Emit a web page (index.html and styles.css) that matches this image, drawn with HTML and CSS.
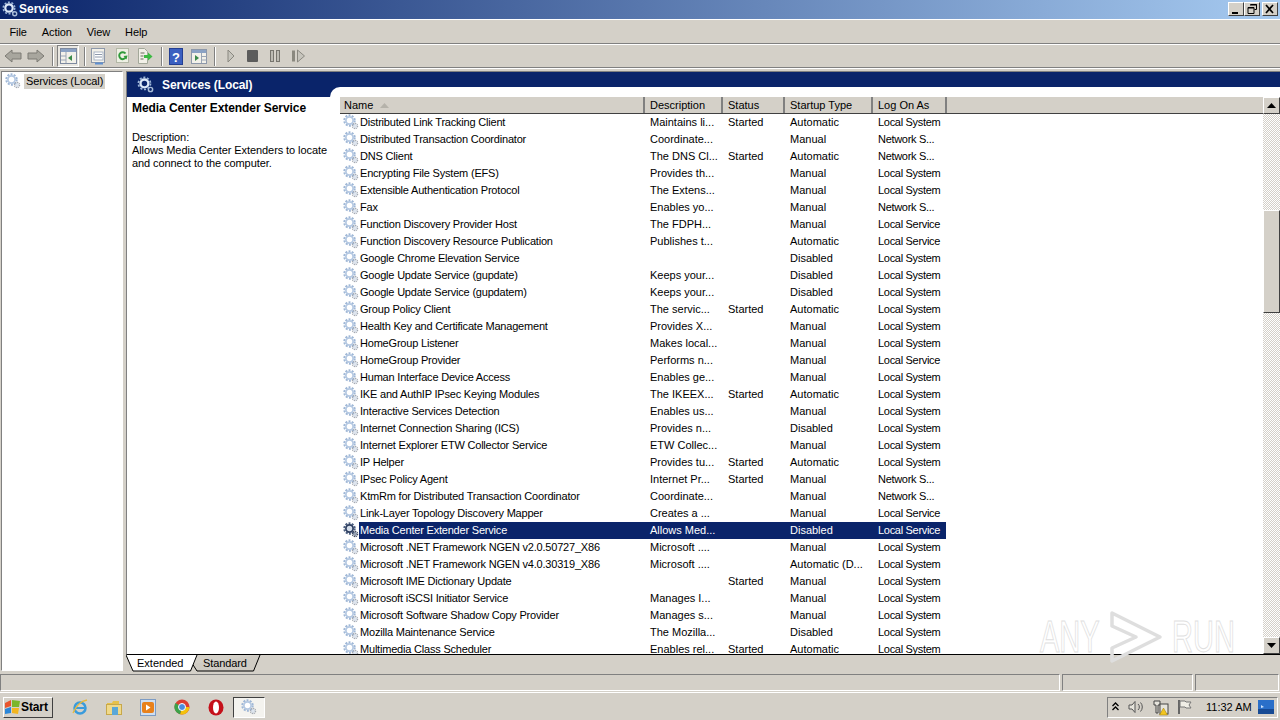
FILE: index.html
```html
<!DOCTYPE html>
<html lang="en">
<head>
<meta charset="utf-8">
<title>Services</title>
<link rel="stylesheet" href="styles.css">
</head>
<body>
<svg class="defs" width="0" height="0">
  <defs>
    <symbol id="gear" viewBox="0 0 16 16">
      <circle cx="6.500" cy="6.500" r="5.200" fill="none" stroke="#9fb7d6" stroke-width="2" stroke-dasharray="2 1.270"/>
      <circle cx="6.500" cy="6.500" r="3.600" fill="#fff" stroke="#b4c8e2" stroke-width="1.700"/>
      <circle cx="12" cy="12" r="2.600" fill="none" stroke="#a4a9b2" stroke-width="1.300" stroke-dasharray="1.300 .7"/>
      <circle cx="12" cy="12" r="1.400" fill="#f2f5f9" stroke="#b7c6d8" stroke-width=".7"/>
    </symbol>
    <symbol id="gear-dark" viewBox="0 0 16 16">
      <circle cx="6.500" cy="6.500" r="5.200" fill="none" stroke="#4c5f80" stroke-width="2" stroke-dasharray="2 1.270"/>
      <circle cx="6.500" cy="6.500" r="3.600" fill="#d5deea" stroke="#2c3d5f" stroke-width="1.700"/>
      <circle cx="12" cy="12" r="2.600" fill="none" stroke="#3d4658" stroke-width="1.300" stroke-dasharray="1.300 .7"/>
      <circle cx="12" cy="12" r="1.400" fill="#c9d2de" stroke="#364664" stroke-width=".7"/>
    </symbol>
    <symbol id="gear-head" viewBox="0 0 16 16">
      <circle cx="7" cy="7" r="5.700" fill="none" stroke="#9db6d8" stroke-width="1.600" stroke-dasharray="2 1.580"/>
      <circle cx="7" cy="7" r="3.700" fill="#0a246a" stroke="#dce8f7" stroke-width="2.200"/>
      <circle cx="12.700" cy="12.700" r="2" fill="#0a246a" stroke="#a9bdd8" stroke-width="1.400"/>
    </symbol>
  </defs>
</svg>

<div class="screen">
  <header class="titlebar">
    <svg class="title-icon"><use href="#gear-head"/></svg>
    <span class="title-text">Services</span>
    <div class="win-btns">
      <button class="win-btn"><svg width="14" height="12"><rect x="3" y="9" width="6" height="2" fill="#000"/></svg></button>
      <button class="win-btn"><svg width="14" height="12"><path d="M5.500 1.500h6v5h-2M3 4.500h6v6H3z" fill="none" stroke="#000"/><path d="M5 2h7M3 5h6" stroke="#000"/></svg></button>
      <button class="win-btn win-close"><svg width="14" height="12"><path d="M3 2l7 8M10 2l-7 8" stroke="#000" stroke-width="1.700"/></svg></button>
    </div>
  </header>

  <nav class="menubar">
    <span class="menu-item">File</span>
    <span class="menu-item">Action</span>
    <span class="menu-item">View</span>
    <span class="menu-item">Help</span>
  </nav>

  <div class="toolbar">
    <div class="tool-group nav-group">
      <svg width="18" height="16" viewBox="0 0 18 16"><path d="M1 8l7-6v3h9v6H8v3z" fill="#a8a69e" stroke="#7d7b74"/></svg>
      <svg width="18" height="16" viewBox="0 0 18 16"><path d="M17 8l-7-6v3H1v6h9v3z" fill="#a8a69e" stroke="#7d7b74"/></svg>
    </div>
    <span class="tool-sep sep-a"></span>
    <span class="tool-active"><svg width="17" height="16" viewBox="0 0 17 16"><rect x=".5" y=".5" width="16" height="15" fill="#f3f1ea" stroke="#7e8aa0"/><rect x="1" y="1" width="15" height="3" fill="#8ba2c4"/><path d="M6 4v11M1 8h5M1 12h5" stroke="#9aa5b5"/><path d="M12 7v6l-4-3z" fill="#3a8a4a"/></svg></span>
    <span class="tool-sep sep-b"></span>
    <div class="tool-group doc-group">
      <svg class="ic-doc" width="15" height="18" viewBox="0 0 15 18"><rect x=".5" y="1.500" width="13" height="14" fill="#f2f0e8" stroke="#8d98aa"/><rect x="3" y="5" width="9" height="8" fill="#fff" stroke="#a9b4c4"/><path d="M4 7.500h7M4 10h7" stroke="#8d98aa"/><path d="M4 16.500h8" stroke="#5f8fcf" stroke-width="2"/></svg>
      <svg class="ic-refresh" width="13" height="18" viewBox="0 0 13 18"><rect x=".5" y="1.500" width="12" height="14" fill="#eef0e4" stroke="#b3b8a6"/><path d="M9.500 6.500a3.500 3.500 0 1 0 .2 4" fill="none" stroke="#2f9a3a" stroke-width="2"/><path d="M7.500 9l4-.5-1 4z" fill="#2f9a3a"/></svg>
      <svg width="16" height="18" viewBox="0 0 16 18"><path d="M1.500 1.500h6l3 3v12h-9z" fill="#f2f0e8" stroke="#a3a89a"/><path d="M3.500 6h4M3.500 9h3M3.500 12h3" stroke="#6a6a60"/><path d="M7 8h4V5.500l4.500 4-4.500 4V11H7z" fill="#3dba43"/></svg>
    </div>
    <span class="tool-sep sep-c"></span>
    <div class="tool-group help-group">
      <svg width="14" height="17" viewBox="0 0 14 17"><rect x=".5" y=".5" width="13" height="16" fill="#3b5fc0" stroke="#243f93"/><text x="7" y="13.500" class="help-q">?</text></svg>
      <svg width="16" height="17" viewBox="0 0 16 17"><rect x=".5" y="1.500" width="15" height="14" fill="#f3f1ea" stroke="#8d98aa"/><rect x="1" y="2" width="14" height="3" fill="#8ba2c4"/><path d="M10.500 5v10M10.500 8.500h5M10.500 12h5" stroke="#9aa5b5"/><path d="M4 7v6l4-3z" fill="#3a8a4a"/></svg>
    </div>
    <span class="tool-sep sep-d"></span>
    <div class="tool-group media-group">
      <svg width="8" height="14" viewBox="0 0 8 14"><path d="M1 1l6 6-6 6z" fill="#c6c4bc" stroke="#8a8880"/></svg>
      <svg width="11" height="12" viewBox="0 0 11 12"><rect width="11" height="12" rx="1" fill="#5c5c5c"/></svg>
      <svg width="10" height="14" viewBox="0 0 10 14"><rect x=".5" y="1.500" width="3" height="11" fill="#bdbbb3" stroke="#77756e"/><rect x="6.500" y="1.500" width="3" height="11" fill="#bdbbb3" stroke="#77756e"/></svg>
      <svg width="13" height="14" viewBox="0 0 13 14"><rect x="0" y="1.500" width="3" height="11" fill="#8a887f"/><path d="M5.500 1l7 6-7 6z" fill="#c6c4bc" stroke="#8a8880"/></svg>
    </div>
  </div>

  <main class="workspace">
    <aside class="tree">
      <div class="tree-row">
        <svg class="row-icon"><use href="#gear"/></svg>
        <span class="tree-label">Services (Local)</span>
      </div>
    </aside>
    <section class="content">
      <div class="panel">
        <div class="panel-head">
          <svg class="panel-icon"><use href="#gear-head"/></svg>
          <span class="panel-title">Services (Local)</span>
        </div>
        <div class="panel-body">
          <div class="desc">
            <h2 class="desc-title">Media Center Extender Service</h2>
            <p class="desc-text">Description:<br>Allows Media Center Extenders to locate and connect to the computer.</p>
          </div>
          <div class="list">
            <div class="list-main">
              <div class="row head">
                <span class="hcell name-h">Name<svg class="sort" width="9" height="5"><path d="M0 5L4.500 0 9 5z" fill="#b5b2aa"/></svg></span>
                <span class="hcell">Description</span>
                <span class="hcell">Status</span>
                <span class="hcell">Startup Type</span>
                <span class="hcell">Log On As</span>
              </div>
              <div class="rows">
                <div class="row"><svg class="row-icon"><use href="#gear"/></svg><span class="c n">Distributed Link Tracking Client</span><span class="c">Maintains li...</span><span class="c">Started</span><span class="c">Automatic</span><span class="c l">Local System</span></div>
                <div class="row"><svg class="row-icon"><use href="#gear"/></svg><span class="c n">Distributed Transaction Coordinator</span><span class="c">Coordinate...</span><span class="c"></span><span class="c">Manual</span><span class="c l">Network S...</span></div>
                <div class="row"><svg class="row-icon"><use href="#gear"/></svg><span class="c n">DNS Client</span><span class="c">The DNS Cl...</span><span class="c">Started</span><span class="c">Automatic</span><span class="c l">Network S...</span></div>
                <div class="row"><svg class="row-icon"><use href="#gear"/></svg><span class="c n">Encrypting File System (EFS)</span><span class="c">Provides th...</span><span class="c"></span><span class="c">Manual</span><span class="c l">Local System</span></div>
                <div class="row"><svg class="row-icon"><use href="#gear"/></svg><span class="c n">Extensible Authentication Protocol</span><span class="c">The Extens...</span><span class="c"></span><span class="c">Manual</span><span class="c l">Local System</span></div>
                <div class="row"><svg class="row-icon"><use href="#gear"/></svg><span class="c n">Fax</span><span class="c">Enables yo...</span><span class="c"></span><span class="c">Manual</span><span class="c l">Network S...</span></div>
                <div class="row"><svg class="row-icon"><use href="#gear"/></svg><span class="c n">Function Discovery Provider Host</span><span class="c">The FDPH...</span><span class="c"></span><span class="c">Manual</span><span class="c l">Local Service</span></div>
                <div class="row"><svg class="row-icon"><use href="#gear"/></svg><span class="c n">Function Discovery Resource Publication</span><span class="c">Publishes t...</span><span class="c"></span><span class="c">Automatic</span><span class="c l">Local Service</span></div>
                <div class="row"><svg class="row-icon"><use href="#gear"/></svg><span class="c n">Google Chrome Elevation Service</span><span class="c"></span><span class="c"></span><span class="c">Disabled</span><span class="c l">Local System</span></div>
                <div class="row"><svg class="row-icon"><use href="#gear"/></svg><span class="c n">Google Update Service (gupdate)</span><span class="c">Keeps your...</span><span class="c"></span><span class="c">Disabled</span><span class="c l">Local System</span></div>
                <div class="row"><svg class="row-icon"><use href="#gear"/></svg><span class="c n">Google Update Service (gupdatem)</span><span class="c">Keeps your...</span><span class="c"></span><span class="c">Disabled</span><span class="c l">Local System</span></div>
                <div class="row"><svg class="row-icon"><use href="#gear"/></svg><span class="c n">Group Policy Client</span><span class="c">The servic...</span><span class="c">Started</span><span class="c">Automatic</span><span class="c l">Local System</span></div>
                <div class="row"><svg class="row-icon"><use href="#gear"/></svg><span class="c n">Health Key and Certificate Management</span><span class="c">Provides X...</span><span class="c"></span><span class="c">Manual</span><span class="c l">Local System</span></div>
                <div class="row"><svg class="row-icon"><use href="#gear"/></svg><span class="c n">HomeGroup Listener</span><span class="c">Makes local...</span><span class="c"></span><span class="c">Manual</span><span class="c l">Local System</span></div>
                <div class="row"><svg class="row-icon"><use href="#gear"/></svg><span class="c n">HomeGroup Provider</span><span class="c">Performs n...</span><span class="c"></span><span class="c">Manual</span><span class="c l">Local Service</span></div>
                <div class="row"><svg class="row-icon"><use href="#gear"/></svg><span class="c n">Human Interface Device Access</span><span class="c">Enables ge...</span><span class="c"></span><span class="c">Manual</span><span class="c l">Local System</span></div>
                <div class="row"><svg class="row-icon"><use href="#gear"/></svg><span class="c n">IKE and AuthIP IPsec Keying Modules</span><span class="c">The IKEEX...</span><span class="c">Started</span><span class="c">Automatic</span><span class="c l">Local System</span></div>
                <div class="row"><svg class="row-icon"><use href="#gear"/></svg><span class="c n">Interactive Services Detection</span><span class="c">Enables us...</span><span class="c"></span><span class="c">Manual</span><span class="c l">Local System</span></div>
                <div class="row"><svg class="row-icon"><use href="#gear"/></svg><span class="c n">Internet Connection Sharing (ICS)</span><span class="c">Provides n...</span><span class="c"></span><span class="c">Disabled</span><span class="c l">Local System</span></div>
                <div class="row"><svg class="row-icon"><use href="#gear"/></svg><span class="c n">Internet Explorer ETW Collector Service</span><span class="c">ETW Collec...</span><span class="c"></span><span class="c">Manual</span><span class="c l">Local System</span></div>
                <div class="row"><svg class="row-icon"><use href="#gear"/></svg><span class="c n">IP Helper</span><span class="c">Provides tu...</span><span class="c">Started</span><span class="c">Automatic</span><span class="c l">Local System</span></div>
                <div class="row"><svg class="row-icon"><use href="#gear"/></svg><span class="c n">IPsec Policy Agent</span><span class="c">Internet Pr...</span><span class="c">Started</span><span class="c">Manual</span><span class="c l">Network S...</span></div>
                <div class="row"><svg class="row-icon"><use href="#gear"/></svg><span class="c n">KtmRm for Distributed Transaction Coordinator</span><span class="c">Coordinate...</span><span class="c"></span><span class="c">Manual</span><span class="c l">Network S...</span></div>
                <div class="row"><svg class="row-icon"><use href="#gear"/></svg><span class="c n">Link-Layer Topology Discovery Mapper</span><span class="c">Creates a ...</span><span class="c"></span><span class="c">Manual</span><span class="c l">Local Service</span></div>
                <div class="row selected"><svg class="row-icon"><use href="#gear-dark"/></svg><span class="c n">Media Center Extender Service</span><span class="c">Allows Med...</span><span class="c"></span><span class="c">Disabled</span><span class="c l">Local Service</span></div>
                <div class="row"><svg class="row-icon"><use href="#gear"/></svg><span class="c n">Microsoft .NET Framework NGEN v2.0.50727_X86</span><span class="c">Microsoft ....</span><span class="c"></span><span class="c">Manual</span><span class="c l">Local System</span></div>
                <div class="row"><svg class="row-icon"><use href="#gear"/></svg><span class="c n">Microsoft .NET Framework NGEN v4.0.30319_X86</span><span class="c">Microsoft ....</span><span class="c"></span><span class="c">Automatic (D...</span><span class="c l">Local System</span></div>
                <div class="row"><svg class="row-icon"><use href="#gear"/></svg><span class="c n">Microsoft IME Dictionary Update</span><span class="c"></span><span class="c">Started</span><span class="c">Manual</span><span class="c l">Local System</span></div>
                <div class="row"><svg class="row-icon"><use href="#gear"/></svg><span class="c n">Microsoft iSCSI Initiator Service</span><span class="c">Manages I...</span><span class="c"></span><span class="c">Manual</span><span class="c l">Local System</span></div>
                <div class="row"><svg class="row-icon"><use href="#gear"/></svg><span class="c n">Microsoft Software Shadow Copy Provider</span><span class="c">Manages s...</span><span class="c"></span><span class="c">Manual</span><span class="c l">Local System</span></div>
                <div class="row"><svg class="row-icon"><use href="#gear"/></svg><span class="c n">Mozilla Maintenance Service</span><span class="c">The Mozilla...</span><span class="c"></span><span class="c">Disabled</span><span class="c l">Local System</span></div>
                <div class="row"><svg class="row-icon"><use href="#gear"/></svg><span class="c n">Multimedia Class Scheduler</span><span class="c">Enables rel...</span><span class="c">Started</span><span class="c">Automatic</span><span class="c l">Local System</span></div>
              </div>
            </div>
            <div class="scrollbar">
              <button class="sb-btn"><svg width="9" height="5"><path d="M0 5L4.500 0 9 5z" fill="#000"/></svg></button>
              <div class="sb-track"><div class="sb-thumb"></div></div>
              <button class="sb-btn"><svg width="9" height="5"><path d="M0 0L4.500 5 9 0z" fill="#000"/></svg></button>
            </div>
          </div>
        </div>
      </div>
      <div class="tabs">
        <svg class="tab-shapes" width="140" height="17" viewBox="0 0 140 17">
          <path d="M66.500 9L71 16H127.500L134 0" fill="#cfcbc3" stroke="#000"/>
          <path d="M0 0L7 16H64.500L71 0" fill="#fff" stroke="#000"/>
        </svg>
        <span class="tab tab-on">Extended</span>
        <span class="tab tab-off">Standard</span>
      </div>
    </section>
    <div class="watermark">
      <span class="wm-text">ANY</span>
      <svg class="wm-play" width="54" height="54" viewBox="0 0 54 54"><path d="M3 3L51 27 3 51V38L27 27 3 16z" fill="none" stroke="#dedede" stroke-width="3.500" stroke-linejoin="round"/></svg>
      <span class="wm-text">RUN</span>
    </div>
  </main>

  <div class="statusbar">
    <span class="st st-a"></span>
    <span class="st st-b"></span>
    <span class="st st-c"></span>
  </div>

  <footer class="taskbar">
    <button class="start">
      <svg width="17" height="16" viewBox="0 0 17 16"><path d="M1 4l6-3v6l-6 2z" fill="#e8552d"/><path d="M8 1l8 1-1 6H8z" fill="#7ab62c"/><path d="M1 10l6-2v6l-6 1z" fill="#2a86d8"/><path d="M8 9h7l-1 6-6-1z" fill="#f2b51f"/></svg>
      <span class="start-label">Start</span>
    </button>
    <div class="quick">
      <svg width="16" height="17" viewBox="0 0 16 17"><circle cx="8" cy="9" r="5.500" fill="none" stroke="#3a9bdc" stroke-width="2.500"/><path d="M3.500 9h9" stroke="#3a9bdc" stroke-width="2"/><path d="M1 14C4 7 9 2 15 1" fill="none" stroke="#e9b93a" stroke-width="1.300"/></svg>
      <svg width="16" height="15" viewBox="0 0 16 15"><path d="M1 3h5l1-2h6v3H1z" fill="#e6c14c"/><rect x=".5" y="4.500" width="15" height="10" fill="#f0d98a" stroke="#c7a84a"/><rect x="6" y="7" width="6" height="8" fill="#5aa7d8"/></svg>
      <svg width="16" height="17" viewBox="0 0 16 17"><rect x=".5" y=".5" width="15" height="16" fill="#cfdff2" stroke="#7d9cc4"/><rect x="2" y="3" width="12" height="11" rx="2" fill="#e8811c"/><path d="M6 5.500l4.500 3-4.500 3z" fill="#fff"/></svg>
      <svg width="16" height="16" viewBox="0 0 16 16"><circle cx="8" cy="8" r="7.500" fill="#dc3e32"/><path d="M8 8h7.500A7.500 7.500 0 0 1 6 15.200z" fill="#f4c20d"/><path d="M8 8L6 15.200A7.500 7.500 0 0 1 1.500 4z" fill="#3da24a"/><circle cx="8" cy="8" r="3.500" fill="#4a8de0" stroke="#fff"/></svg>
      <svg width="16" height="17" viewBox="0 0 16 17"><ellipse cx="8" cy="8.500" rx="7.500" ry="8" fill="#c5101a"/><ellipse cx="8" cy="8.500" rx="3" ry="6" fill="#fff"/></svg>
    </div>
    <button class="task-btn"><svg class="row-icon"><use href="#gear"/></svg></button>
    <div class="tray">
      <svg class="tr-arrows" width="7" height="10" viewBox="0 0 7 10"><path d="M.5 4l3-3 3 3M.5 8l3-3 3 3" fill="none" stroke="#000" stroke-width="1.300"/></svg>
      <svg class="tr-speaker" width="17" height="16" viewBox="0 0 17 16"><path d="M1 6h3l3-3.500v11L4 10H1z" fill="#e6e4dc" stroke="#555"/><path d="M10 5a4 4 0 0 1 0 6M12.500 3.500a6.500 6.500 0 0 1 0 9" fill="none" stroke="#555"/></svg>
      <svg class="tr-net" width="16" height="17" viewBox="0 0 16 17"><path d="M1 2h6v4H5v8H3V6H1z" fill="#e6e4dc" stroke="#444"/><rect x="7" y="5" width="8" height="10" fill="#e6e4dc" stroke="#444"/><path d="M10.500 9l4 7h-8z" fill="#f2c51f" stroke="#9a7a10" stroke-width=".5"/></svg>
      <svg class="tr-flag" width="16" height="16" viewBox="0 0 16 16"><path d="M2 1v14" stroke="#666" stroke-width="2"/><path d="M3 2h5l1 1h5l-2 3 2 3H9L8 8H3z" fill="#f0eee6" stroke="#777"/></svg>
      <span class="clock">11:32 AM</span>
      <svg class="tr-desk" width="16" height="14" viewBox="0 0 16 14"><rect width="16" height="14" fill="#2a6fc9"/><path d="M0 9h16v5H0z" fill="#174a94"/><path d="M3 5l3 2-3 1z" fill="#cfe3fb"/></svg>
    </div>
  </footer>
</div>
</body>
</html>
```

FILE: styles.css
```css
* { box-sizing: border-box; }
html, body { margin: 0; padding: 0; }
body { font-family: "Liberation Sans", Arial, sans-serif; font-size: 11px; color: #000; background: #d4d0c8; }
.defs { position: absolute; }
.screen { width: 1280px; height: 720px; overflow: hidden; display: flex; flex-direction: column; background: #d4d0c8; }

.titlebar { height: 19px; flex: none; display: flex; align-items: center; padding: 0 2px 1px 2px; background: linear-gradient(90deg, #0a246a 0%, #a6caf0 100%); color: #fff; }
.title-icon { width: 16px; height: 16px; flex: none; }
.title-text { font-weight: 700; font-size: 12px; margin-left: 1px; }
.win-btns { margin-left: auto; display: flex; }
.win-btn { width: 16px; height: 14px; padding: 0; margin: 0; background: #d4d0c8; border: 1px solid; border-color: #fff #404040 #404040 #fff; display: flex; align-items: center; justify-content: center; }
.win-close { margin-left: 2px; }

.menubar { height: 25px; flex: none; display: flex; align-items: center; padding-left: 2px; border-top: 1px solid #fff; border-bottom: 1px solid #808080; }
.menu-item { padding: 0 7.500px; letter-spacing: -.1px; }

.toolbar { height: 24px; flex: none; display: flex; align-items: center; border-top: 1px solid #fff; border-bottom: 1px solid #808080; }
.tool-group { display: flex; align-items: center; flex: none; }
.tool-sep { width: 2px; height: 19px; flex: none; border-left: 1px solid #808080; border-right: 1px solid #fff; }
.nav-group { gap: 5px; margin-left: 4px; }
.sep-a { margin: 0 3px 0 7px; }
.tool-active { width: 22px; height: 22px; flex: none; display: flex; align-items: center; justify-content: center; background: #e9e7e1; border: 1px solid; border-color: #808080 #fff #fff #808080; }
.sep-b { margin-left: 5px; }
.doc-group { margin-left: 5px; gap: 8px; }
.ic-doc { margin-right: 2px; }
.sep-c { margin-left: 8px; }
.help-group { margin-left: 6px; gap: 8px; }
.sep-d { margin-left: 7px; }
.media-group { margin-left: 11px; gap: 12px; }
.help-q { fill: #fff; font: 700 13px "Liberation Sans", sans-serif; text-anchor: middle; }

.workspace { flex: 1; min-height: 0; position: relative; display: flex; padding: 2px 0 0 1px; border-top: 1px solid #fff; }
.tree { width: 122px; flex: none; height: 600px; background: #fff; border: 1px solid; border-color: #808080 #fff #fff #808080; padding: 1px 3px; }
.tree-row { display: flex; align-items: center; height: 16px; gap: 3px; }
.tree-label { background: #d4d0c8; padding: 0 2px; line-height: 15px; letter-spacing: -.1px; }
.row-icon { width: 16px; height: 16px; flex: none; }

.content { flex: 1; margin-left: 3px; display: flex; flex-direction: column; min-width: 0; }
.panel { height: 584px; flex: none; display: flex; flex-direction: column; background: #fff; border-left: 1px solid #808080; border-top: 1px solid #808080; border-bottom: 1px solid #000; }
.panel-head { height: 25px; flex: none; position: relative; display: flex; align-items: center; gap: 8px; padding-left: 10px; background: #0a246a; color: #fff; }
.panel-head::after { content: ""; position: absolute; left: 203px; top: 15px; right: 0; bottom: 0; background: #fff; border-radius: 10px 0 0 0; }
.panel-icon { width: 17px; height: 17px; flex: none; }
.panel-title { font-weight: 700; font-size: 12px; letter-spacing: -.1px; }
.panel-body { flex: 1; min-height: 0; display: flex; }
.desc { width: 213px; flex: none; padding: 4px 5px 0 5px; }
.desc-title { margin: 0 0 15px; font-size: 12px; font-weight: 700; line-height: 15px; letter-spacing: -.07px; }
.desc-text { margin: 0; line-height: 13px; letter-spacing: -.08px; }

.list { flex: 1; min-width: 0; display: flex; }
.list-main { flex: 1; min-width: 0; display: flex; flex-direction: column; overflow: hidden; }
.row { display: grid; grid-template-columns: 19px 285px 78px 62px 88px 74px; height: 17px; align-items: stretch; width: 606px; white-space: nowrap; }
.head { grid-template-columns: 305px 78px 62px 88px 74px; flex: none; width: 100%; background: #d4d0c8; border-bottom: 1px solid #404040; }
.hcell { height: 16px; padding-left: 5px; line-height: 16px; border-right: 2px solid #808080; }
.name-h { display: flex; align-items: center; gap: 7px; padding-left: 4px; }
.sort { flex: none; }
.rows { flex: 1; min-height: 0; overflow: hidden; }
.c { padding-left: 6px; line-height: 17px; overflow: hidden; }
.c.n { padding-left: 1px; letter-spacing: -.2px; }
.c.l { letter-spacing: -.3px; }
.row .row-icon { margin-left: 3px; }
.selected .c { background: #0a246a; color: #fff; }

.scrollbar { width: 17px; flex: none; display: flex; flex-direction: column; margin-left: auto; }
.sb-btn { width: 17px; height: 17px; flex: none; padding: 0; background: #d4d0c8; border: 1px solid; border-color: #fff #404040 #404040 #fff; display: flex; align-items: center; justify-content: center; }
.sb-track { flex: 1; padding-top: 96px; background: repeating-conic-gradient(#fff 0 25%, #d4d0c8 0 50%) 0 0 / 2px 2px; }
.sb-thumb { height: 103px; background: #d4d0c8; border: 1px solid; border-color: #fff #404040 #404040 #fff; }

.tabs { height: 16px; flex: none; position: relative; display: flex; }
.tab-shapes { position: absolute; left: 0; top: 0; }
.tab { position: relative; height: 16px; line-height: 17px; }
.tab-on { margin-left: 11px; width: 66px; }
.tab-off { letter-spacing: -.1px; }

.watermark { position: absolute; left: 1040px; top: 541px; width: 192px; height: 54px; display: flex; align-items: center; justify-content: space-between; pointer-events: none; }
.wm-text { width: 60px; font: 400 44px "Liberation Sans", sans-serif; color: transparent; -webkit-text-stroke: 1px #e0e0e0; transform: scaleX(.66); transform-origin: left center; }
.wm-play { flex: none; }

.statusbar { height: 22px; flex: none; display: flex; gap: 2px; padding: 3px 1px 2px 0; border-bottom: 1px solid #fff; }
.st { height: 17px; border: 1px solid; border-color: #808080 #fff #fff #808080; }
.st-a { width: 1060px; }
.st-b { width: 131px; }
.st-c { flex: 1; }

.taskbar { height: 27px; flex: none; display: flex; align-items: center; padding: 1px 2px 0 3px; }
.start { width: 50px; height: 21px; padding: 0; display: flex; align-items: center; gap: 0; background: #d4d0c8; border: 1px solid; border-color: #fff #404040 #404040 #fff; font: 700 12px "Liberation Sans", sans-serif; letter-spacing: -.1px; }
.quick { display: flex; align-items: center; gap: 18px; margin-left: 19px; }
.task-btn { width: 32px; height: 21px; margin-left: 9px; padding: 0; display: flex; align-items: center; justify-content: center; background: #f4f3ef; border: 1px solid; border-color: #404040 #fff #fff #404040; }
.tray { margin-left: auto; width: 171px; height: 21px; display: flex; align-items: center; padding: 0 2px 0 4px; border: 1px solid; border-color: #808080 #fff #fff #808080; }
.tr-speaker { margin-left: 9px; }
.tr-net { margin-left: 8px; }
.tr-flag { margin-left: 8px; }
.clock { margin-left: 13px; white-space: nowrap; }
.tr-desk { margin-left: auto; margin-right: 1px; }
```
